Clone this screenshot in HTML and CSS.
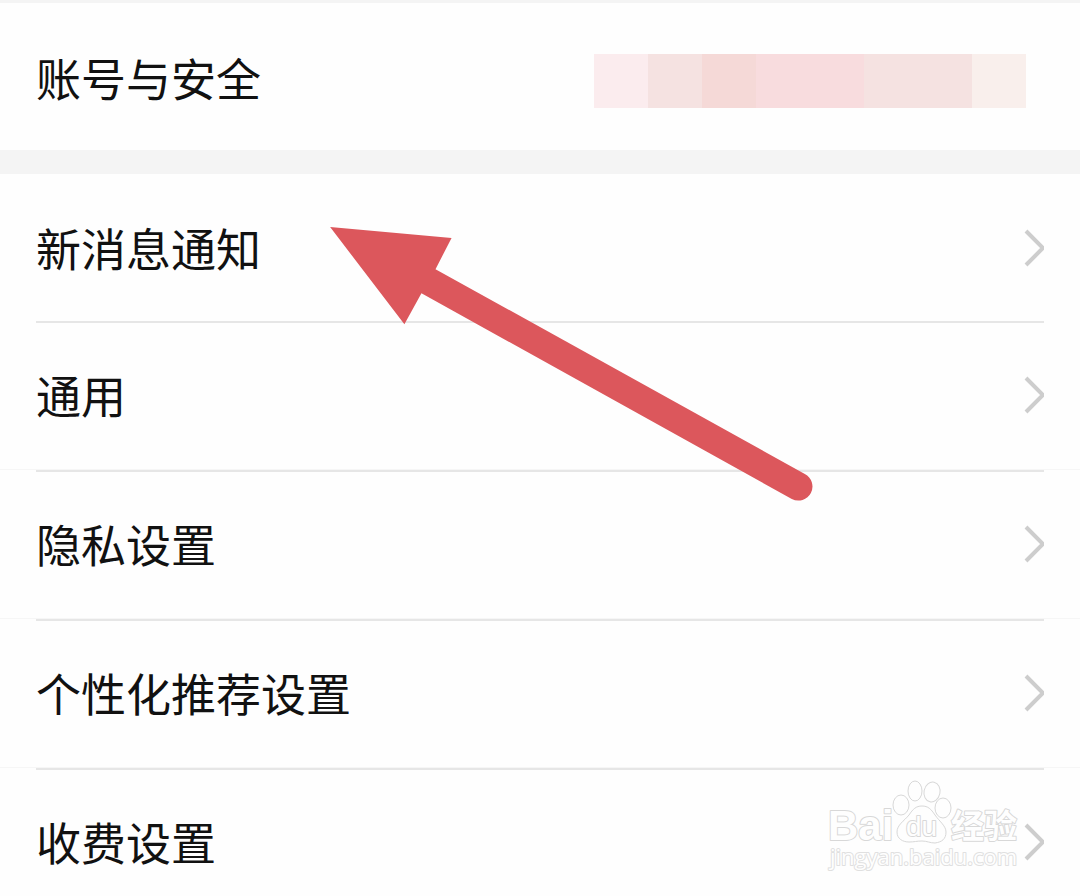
FILE: index.html
```html
<!DOCTYPE html>
<html lang="zh-CN">
<head>
<meta charset="utf-8">
<meta name="viewport" content="width=device-width, initial-scale=1">
<title>设置</title>
<link rel="stylesheet" href="styles.css">
</head>
<body>
<main class="settings">
  <section class="group">
    <a class="row row-account" href="#account">
      <span class="label">账号与安全</span>
      <span class="mosaic" aria-hidden="true">
        <span class="tile tile-blush"></span>
        <span class="tile tile-sand"></span>
        <span class="tile tile-peach"></span>
        <span class="tile tile-pink"></span>
        <span class="tile tile-pink"></span>
        <span class="tile tile-sand"></span>
        <span class="tile tile-sand"></span>
        <span class="tile tile-cream"></span>
      </span>
    </a>
  </section>
  <ul class="group list">
    <li class="item"><a class="row" href="#notice"><span class="label">新消息通知</span><svg class="chevron" viewBox="0 0 20 40" aria-hidden="true"><path d="M2 3 19 20 2 37"/></svg></a></li>
    <li class="item"><a class="row" href="#general"><span class="label">通用</span><svg class="chevron" viewBox="0 0 20 40" aria-hidden="true"><path d="M2 3 19 20 2 37"/></svg></a></li>
    <li class="item"><a class="row" href="#privacy"><span class="label">隐私设置</span><svg class="chevron" viewBox="0 0 20 40" aria-hidden="true"><path d="M2 3 19 20 2 37"/></svg></a></li>
    <li class="item"><a class="row" href="#recommend"><span class="label">个性化推荐设置</span><svg class="chevron" viewBox="0 0 20 40" aria-hidden="true"><path d="M2 3 19 20 2 37"/></svg></a></li>
    <li class="item"><a class="row" href="#billing"><span class="label">收费设置</span><svg class="chevron" viewBox="0 0 20 40" aria-hidden="true"><path d="M2 3 19 20 2 37"/></svg></a></li>
  </ul>
  <svg class="pointer" viewBox="0 0 482 276" aria-hidden="true">
    <path d="M0 0 121 11 105 42 473 246A14 14 0 0 1 460 271L91 66 74 97Z"/>
  </svg>
  <svg class="watermark" viewBox="0 0 204 100" role="img" aria-label="Baidu经验 jingyan.baidu.com">
    <text class="mark-bai" x="2" y="62">Bai</text>
    <g class="paw">
      <ellipse cx="75" cy="27" rx="8" ry="10"/>
      <ellipse cx="89" cy="13" rx="7" ry="10"/>
      <ellipse cx="106" cy="14" rx="8" ry="10" transform="rotate(12 106 14)"/>
      <ellipse cx="117" cy="30" rx="8" ry="10"/>
      <path d="M96 28C90 28 87 31 83 37 78 43 71 47 71 54 71 61 77 64 83 64 88 64 91 63 96 63 101 63 104 65 109 65 116 64 120 61 120 54 120 48 114 44 109 37 105 31 102 28 96 28Z"/>
    </g>
    <text class="mark-du" x="80" y="58">du</text>
    <text class="mark-cn" x="125" y="60">经验</text>
    <text class="mark-url" x="4" y="87">jingyan.baidu.com</text>
  </svg>
</main>
</body>
</html>
```
FILE: styles.css
```css
* { box-sizing: border-box; }

body {
  margin: 0;
  background: #fefefe;
  color: #111;
  font-family: "Noto Sans CJK SC", sans-serif;
}

.settings {
  position: relative;
  overflow: hidden;
  border-top: 3px solid #f4f4f4;
}

.group { margin: 0; padding: 0; }

.list {
  list-style: none;
  border-top: 24px solid #f4f4f4;
}

.row {
  display: flex;
  align-items: center;
  justify-content: space-between;
  margin: 0 36px;
  padding: 42px 0 41px;
  color: inherit;
  text-decoration: none;
}

.row-account { padding: 43px 0 40px; }

.label {
  font-size: 45px;
  line-height: 64px;
}

.item + .item .row {
  border-top: 2px solid #e6e6e6;
  padding-top: 40px;
}
.item + .item:not(:last-child) { border-bottom: 1px solid #f6f6f6; }
.item + .item:not(:last-child) .row { padding-bottom: 42px; }
.item:last-child .row { padding-bottom: 21px; }

.chevron {
  width: 20px;
  height: 40px;
  fill: none;
  stroke: #cdcdcd;
  stroke-width: 4;
}

.mosaic {
  display: flex;
  margin: 6px 18px 0 0;
}

.tile { width: 54px; height: 54px; }
.tile-blush { background: #fbecee; }
.tile-sand { background: #f5e2e1; }
.tile-peach { background: #f5d9d7; }
.tile-pink { background: #f8dcde; }
.tile-cream { background: #f9efec; }

.pointer {
  position: absolute;
  left: 330px;
  top: 224px;
  width: 484px;
  height: 277px;
  fill: #dc575c;
  pointer-events: none;
}

.watermark {
  position: absolute;
  right: 50px;
  bottom: 17px;
  width: 204px;
  height: 100px;
  fill: #fefefe;
  stroke: #d8d8d8;
  stroke-width: 1;
  pointer-events: none;
}

.watermark text {
  stroke-width: 2;
  stroke-linejoin: round;
  paint-order: stroke;
}

.mark-bai { font: bold 42px "Liberation Sans", sans-serif; }
.mark-du { font: 28px "Liberation Sans", sans-serif; }
.mark-cn { font: bold 33px "Noto Sans CJK SC", sans-serif; }
.mark-url { font: 22px "Open Sans", sans-serif; stroke: #e0e0e0; }
```
